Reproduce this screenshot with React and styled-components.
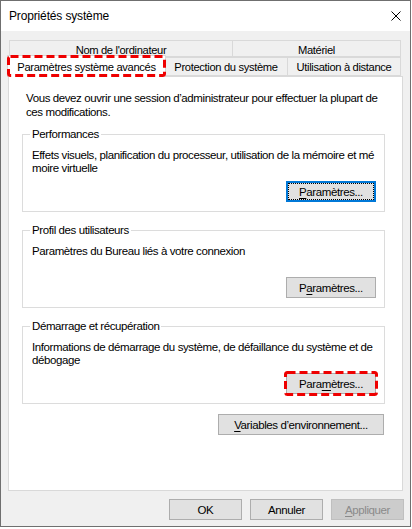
import styled, { createGlobalStyle } from "styled-components";

const GlobalStyle = createGlobalStyle`
  html, body {
    margin: 0;
    padding: 0;
    background: #ffffff;
  }
  body {
    font-family: "Liberation Sans", Arial, sans-serif;
    font-size: 12px;
    color: #000000;
  }
  * {
    box-sizing: border-box;
  }
`;

const Window = styled.div`
  width: 411px;
  height: 527px;
  display: flex;
  flex-direction: column;
  background: #f0f0f0;
  border: 1px solid #6f6f6f;
`;

const TitleBar = styled.div`
  height: 30px;
  display: flex;
  align-items: center;
  justify-content: space-between;
  padding: 0 9px 0 8px;
  background: #ffffff;
`;

const Title = styled.span`
  font-size: 12px;
  letter-spacing: -0.15px;
`;

const Body = styled.div`
  flex: 1;
  display: flex;
  flex-direction: column;
  padding: 9px 0 0 7px;
`;

const TabStrip = styled.div`
  margin-left: 1px;
  width: 392px;
  display: flex;
  flex-direction: column;
`;

const TabRow = styled.div`
  display: flex;
`;

const Tab = styled.div`
  position: relative;
  width: ${(p) => p.$width}px;
  height: ${(p) => (p.$selected ? 22 : p.$back ? 17 : 19)}px;
  margin-left: ${(p) => (p.$selected ? -2 : p.$overlap ? -1 : 0)}px;
  margin-right: ${(p) => (p.$selected ? -2 : 0)}px;
  margin-top: ${(p) => (p.$selected ? -2 : 0)}px;
  margin-bottom: ${(p) => (p.$selected ? -1 : 0)}px;
  z-index: ${(p) => (p.$selected ? 2 : 0)};
  display: flex;
  align-items: center;
  justify-content: center;
  padding-top: ${(p) => (p.$back ? 3 : 1)}px;
  border: 1px solid #d9d9d9;
  border-bottom: ${(p) => (p.$selected ? "none" : "1px solid #d9d9d9")};
  background: ${(p) => (p.$selected ? "#ffffff" : "#f0f0f0")};
  white-space: nowrap;
  font-size: 11.2px;
  letter-spacing: -0.35px;
`;

const Panel = styled.div`
  position: relative;
  z-index: 1;
  width: 395px;
  height: 415px;
  background: #ffffff;
  border: 1px solid #d9d9d9;
  padding: 14px 17px 0 13px;
  display: flex;
  flex-direction: column;
`;

const Text = styled.p`
  margin: 0;
  line-height: ${(p) => p.$lh || 13}px;
  white-space: nowrap;
  font-size: 11.5px;
  letter-spacing: -0.4px;
  padding-left: ${(p) => p.$indent || 0}px;
`;

const Group = styled.div`
  position: relative;
  height: 78px;
  margin-top: ${(p) => p.$gap}px;
  border: 1px solid #dcdcdc;
  display: flex;
  flex-direction: column;
  padding: 14px 8px 9px 9px;
`;

const Legend = styled.span`
  position: absolute;
  top: -8px;
  left: 7px;
  padding: 0 2px;
  background: #ffffff;
  line-height: 14px;
  font-size: 11.5px;
  letter-spacing: -0.4px;
  white-space: nowrap;
`;

const ButtonSlot = styled.div`
  position: relative;
  margin-top: auto;
  align-self: flex-end;
  display: flex;
`;

const Button = styled.button`
  position: relative;
  width: ${(p) => p.$width}px;
  height: 21px;
  padding: 0;
  font-family: "Liberation Sans", Arial, sans-serif;
  font-size: 11.5px;
  letter-spacing: -0.4px;
  color: ${(p) => (p.disabled ? "#8a8a8a" : "#000000")};
  background: ${(p) => (p.disabled ? "#cccccc" : "#e1e1e1")};
  border: ${(p) =>
    p.$focused ? "2px solid #0078d7" : p.disabled ? "1px solid #bfbfbf" : "1px solid #adadad"};

  u {
    text-decoration-thickness: 1px;
    text-underline-offset: 2px;
  }

  &::after {
    content: "";
    display: ${(p) => (p.$focused ? "block" : "none")};
    position: absolute;
    inset: 0;
    border: 1px dotted #000000;
  }
`;

const EnvRow = styled.div`
  display: flex;
  justify-content: flex-end;
  margin-top: 10px;
  padding-right: 1px;
`;

const Footer = styled.div`
  display: flex;
  justify-content: flex-end;
  gap: 8px;
  padding: 8px 6px 0 0;
`;

const Frame = styled.svg`
  position: absolute;
  left: ${(p) => p.$inset}px;
  top: ${(p) => p.$inset}px;
  pointer-events: none;
  overflow: visible;
  z-index: 3;
`;

function DashFrame({ w, h, inset = 0 }) {
  return (
    <Frame $inset={inset} width={w} height={h}>
      <rect
        x="1.5"
        y="1.5"
        width={w - 3}
        height={h - 3}
        rx="2"
        fill="none"
        stroke="#ee0000"
        strokeWidth="3"
        strokeDasharray="8 4"
      />
    </Frame>
  );
}

function CloseIcon() {
  return (
    <svg width="10" height="10" viewBox="0 0 10 10">
      <path d="M0.5 0.5 L9.5 9.5 M9.5 0.5 L0.5 9.5" stroke="#000" strokeWidth="1" />
    </svg>
  );
}

function GroupBox({ legend, lines, gap, button }) {
  return (
    <Group $gap={gap}>
      <Legend>{legend}</Legend>
      {lines.map((line) => (
        <Text key={line}>{line}</Text>
      ))}
      {button}
    </Group>
  );
}

export default function App() {
  return (
    <>
      <GlobalStyle />
      <Window>
        <TitleBar>
          <Title>Propriétés système</Title>
          <CloseIcon />
        </TitleBar>
        <Body>
          <TabStrip>
            <TabRow>
              <Tab $back $width={224}>Nom de l'ordinateur</Tab>
              <Tab $back $overlap $width={169}>Matériel</Tab>
            </TabRow>
            <TabRow>
              <Tab $selected $width={159}>
                Paramètres système avancés
                <DashFrame w={159} h={22} inset={-1} />
              </Tab>
              <Tab $width={124}>Protection du système</Tab>
              <Tab $overlap $width={114}>Utilisation à distance</Tab>
            </TabRow>
          </TabStrip>
          <Panel>
            <Text $lh={14} $indent={4}>
              Vous devez ouvrir une session d’administrateur pour effectuer la plupart de
            </Text>
            <Text $lh={14} $indent={4}>ces modifications.</Text>

            <GroupBox
              gap={15}
              legend="Performances"
              lines={[
                "Effets visuels, planification du processeur, utilisation de la mémoire et mé",
                "moire virtuelle",
              ]}
              button={
                <ButtonSlot>
                  <Button $focused $width={90}>
                    <u>P</u>aramètres...
                  </Button>
                </ButtonSlot>
              }
            />

            <GroupBox
              gap={18}
              legend="Profil des utilisateurs"
              lines={["Paramètres du Bureau liés à votre connexion"]}
              button={
                <ButtonSlot>
                  <Button $width={90}>
                    P<u>a</u>ramètres...
                  </Button>
                </ButtonSlot>
              }
            />

            <GroupBox
              gap={18}
              legend="Démarrage et récupération"
              lines={[
                "Informations de démarrage du système, de défaillance du système et de",
                "débogage",
              ]}
              button={
                <ButtonSlot>
                  <Button $width={90}>
                    Para<u>m</u>ètres...
                  </Button>
                  <DashFrame w={94} h={25} inset={-2} />
                </ButtonSlot>
              }
            />

            <EnvRow>
              <Button $width={166}>
                <u>V</u>ariables d’environnement...
              </Button>
            </EnvRow>
          </Panel>
          <Footer>
            <Button $width={73}>OK</Button>
            <Button $width={73}>Annuler</Button>
            <Button $width={73} disabled>
              <u>A</u>ppliquer
            </Button>
          </Footer>
        </Body>
      </Window>
    </>
  );
}
